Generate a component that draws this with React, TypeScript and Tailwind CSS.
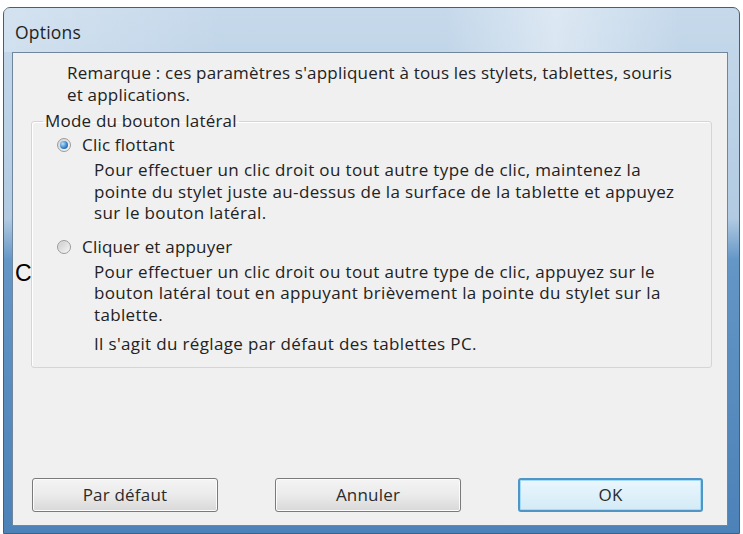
import React from 'react'

function Radio({ checked }: { checked?: boolean }) {
  return (
    <span className="flex h-[14px] w-[14px] shrink-0 items-center justify-center rounded-full border border-[#9a9a9a] bg-gradient-to-br from-[#d4d4d4] to-[#f7f7f7]">
      {checked ? (
        <span className="h-[8px] w-[8px] rounded-full bg-[radial-gradient(circle_at_35%_35%,#b9e3fb,#2f7cc6_60%,#1f5c9c)]" />
      ) : (
        <span className="h-[10px] w-[10px] rounded-full bg-gradient-to-br from-[#cfcfcf] to-[#f2f2f2]" />
      )}
    </span>
  )
}

function DialogButton({ label, primary }: { label: string; primary?: boolean }) {
  return (
    <button
      className={
        primary
          ? 'h-[34px] w-[185px] rounded-[3px] border-2 border-[#4f95c6] bg-gradient-to-b from-[#eaf6fd] to-[#d3ebf7] text-[17px] tracking-[0.2px] text-[#2b2b2b] shadow-[inset_0_0_0_1px_#a6dbf6]'
          : 'h-[34px] w-[186px] rounded-[3px] border border-[#7a7a7a] bg-gradient-to-b from-[#f4f4f4] via-[#ebebeb] to-[#d8d8d8] text-[17px] tracking-[0.2px] text-[#2b2b2b] shadow-[inset_0_0_0_1px_#fcfcfc]'
      }
    >
      {label}
    </button>
  )
}

export default function App() {
  return (
    <div className="relative h-[534px] w-[743px] overflow-hidden bg-white font-['Open_Sans',sans-serif] text-[17px] tracking-[0.2px] text-[#222222]">
      <div className="ml-[3px] mt-[7px] flex h-[527px] w-[737px] flex-col rounded-t-[7px] border border-[#4d5d6e] bg-[linear-gradient(180deg,#c6d9eb_0%,#b2cbe2_40%,#6496c6_48%,#4c82b8_100%)]">
        {/* Title bar */}
        <div className="flex h-[44px] items-center bg-[linear-gradient(90deg,rgba(255,255,255,0.25)_0%,transparent_30%,transparent_60%,rgba(255,255,255,0.4)_75%,transparent_92%)] pl-[11px] pt-[4px] text-[17.5px] text-[#1f1f1f]">
          Options
        </div>

        {/* Client area */}
        <div className="mb-[7px] ml-[8px] mr-[11px] flex flex-1 flex-col border border-[#6f869d] bg-[#f0f0f0]">
          <div className="pl-[54px] pt-[9px] leading-[22px]">
            <p>Remarque : ces paramètres s'appliquent à tous les stylets, tablettes, souris</p>
            <p>et applications.</p>
          </div>

          <fieldset className="ml-[18px] mr-[15px] mt-[4px] rounded-[3px] border border-[#d5d5d5] pb-[12px] pl-[11px] shadow-[inset_1px_1px_0_#ffffff]">
            <legend className="px-[2px] leading-[22px]">Mode du bouton latéral</legend>

            <div className="mt-[2px] flex h-[22px] items-center gap-[11px] pl-[14px]">
              <Radio checked />
              <span>Clic flottant</span>
            </div>
            <div className="ml-[51px] mt-[3px] leading-[21.5px] tracking-[0.35px]">
              <p>Pour effectuer un clic droit ou tout autre type de clic, maintenez la</p>
              <p>pointe du stylet juste au-dessus de la surface de la tablette et appuyez</p>
              <p>sur le bouton latéral.</p>
            </div>

            <div className="mt-[12px] flex h-[22px] items-center gap-[11px] pl-[14px]">
              <Radio />
              <span>Cliquer et appuyer</span>
            </div>
            <div className="ml-[51px] mt-[3px] leading-[21.5px] tracking-[0.35px]">
              <p>Pour effectuer un clic droit ou tout autre type de clic, appuyez sur le</p>
              <p>bouton latéral tout en appuyant brièvement la pointe du stylet sur la</p>
              <p>tablette.</p>
              <p className="mt-[8px]">Il s'agit du réglage par défaut des tablettes PC.</p>
            </div>
          </fieldset>

          <div className="mb-[13px] ml-[19px] mt-auto flex gap-[57px]">
            <DialogButton label="Par défaut" />
            <DialogButton label="Annuler" />
            <DialogButton label="OK" primary />
          </div>
        </div>
      </div>

      <span className="absolute left-[15px] top-[262px] font-['Liberation_Sans',sans-serif] text-[23px] leading-[23px] tracking-normal text-black">
        C
      </span>
    </div>
  )
}
